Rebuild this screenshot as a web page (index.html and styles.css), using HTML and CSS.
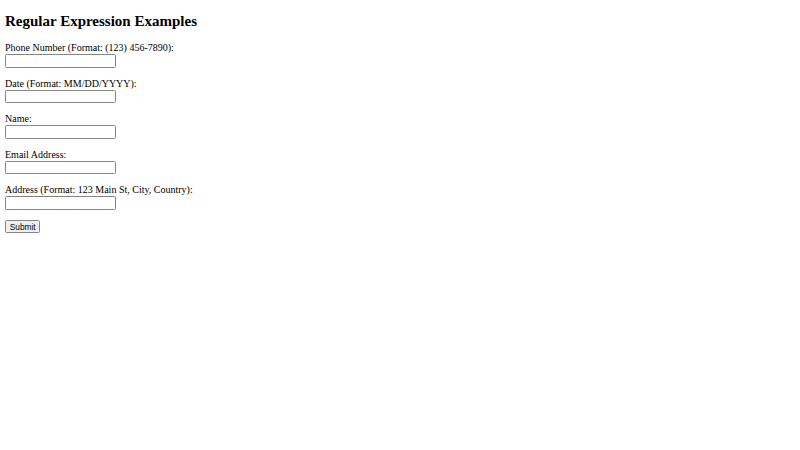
FILE: index.html
```html
<!DOCTYPE html>
<html>
<head>
<meta charset="utf-8">
<link rel="stylesheet" href="styles.css">
</head>
<body>
<h2 class="title">Regular Expression Examples</h2>
<form class="form">
  <div class="row">
    <label class="label" for="phone">Phone Number (Format: (123) 456-7890):</label>
    <input class="field" id="phone" type="text">
  </div>
  <div class="row">
    <label class="label" for="date">Date (Format: MM/DD/YYYY):</label>
    <input class="field" id="date" type="text">
  </div>
  <div class="row">
    <label class="label" for="name">Name:</label>
    <input class="field" id="name" type="text">
  </div>
  <div class="row">
    <label class="label" for="email">Email Address:</label>
    <input class="field" id="email" type="text">
  </div>
  <div class="row">
    <label class="label" for="addr">Address (Format: 123 Main St, City, Country):</label>
    <input class="field" id="addr" type="text">
  </div>
  <div class="row">
    <button class="submit" type="submit">Submit</button>
  </div>
</form>
</body>
</html>
```
FILE: styles.css
```css
html, body {
  margin: 0;
  padding: 0;
  background: #fff;
}
body {
  padding: 5px;
  font-family: "Liberation Serif", "Times New Roman", serif;
  color: #000;
}
.title {
  font-size: 15px;
  font-weight: bold;
  margin: 7.5px 0 0 0;
  line-height: 17.25px;
}
.form {
  display: flex;
  flex-direction: column;
  gap: 10px;
  margin-top: 12.25px;
}
.row {
  display: flex;
  flex-direction: column;
  align-items: flex-start;
}
.label {
  font-size: 10px;
  line-height: 12px;
}
.field {
  box-sizing: border-box;
  width: 111px;
  height: 13.5px;
  margin: 0;
  padding: 0 1.5px;
  border: 1px solid #858585;
  border-radius: 1.5px;
  font-size: 8.3px;
  background: #fff;
}
.submit {
  box-sizing: border-box;
  height: 13px;
  margin: 0.5px 0 0 0;
  padding: 0 3.75px;
  font-family: "Liberation Sans", Arial, sans-serif;
  font-size: 8.33px;
  line-height: 10px;
  border: 1px solid #858585;
  border-radius: 1.5px;
  background: #efefef;
  color: #000;
}
```
